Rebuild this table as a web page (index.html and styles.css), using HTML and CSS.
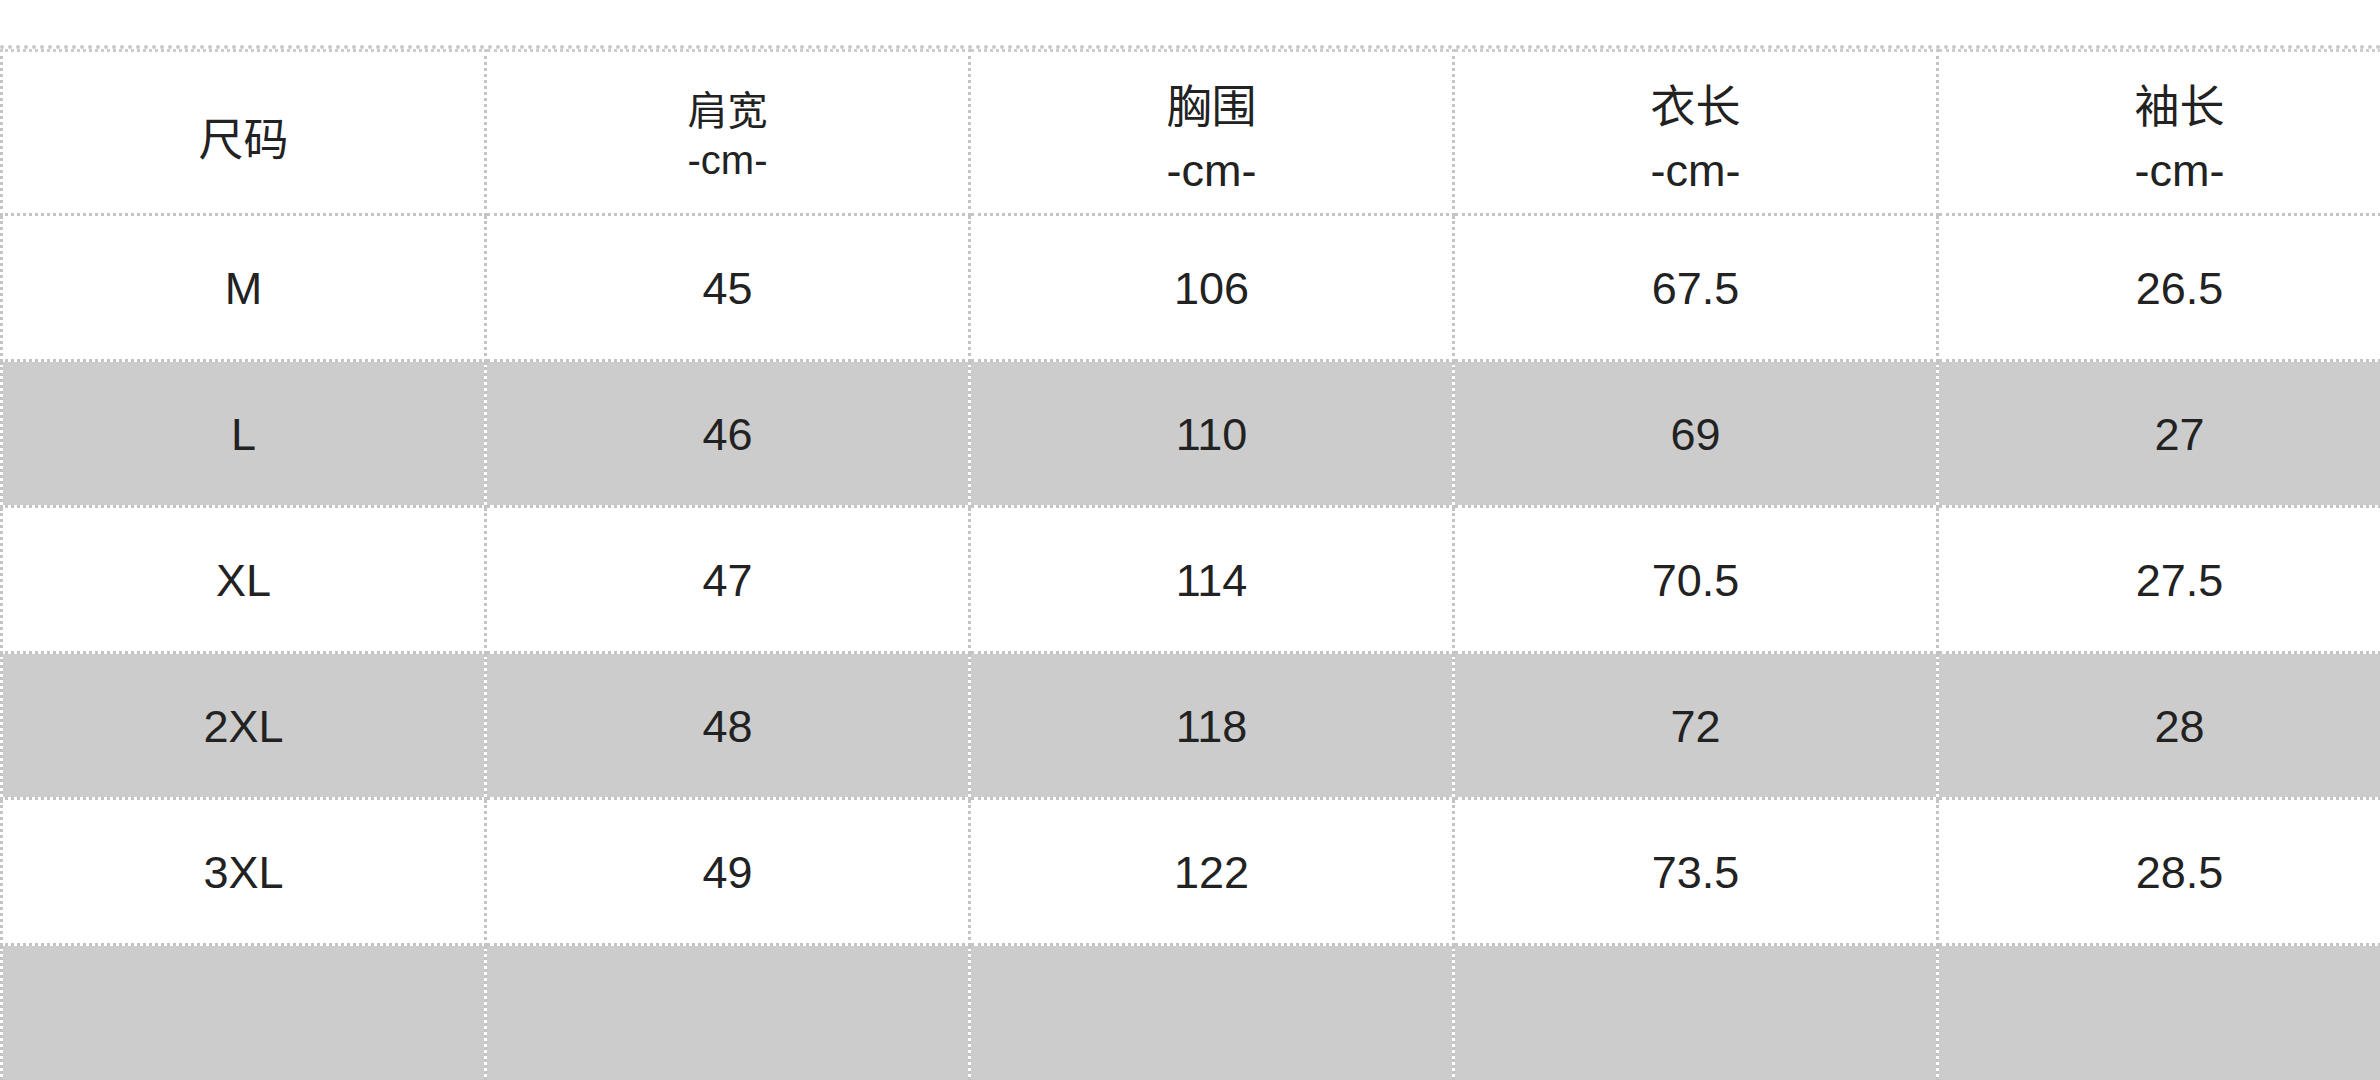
FILE: index.html
```html
<!DOCTYPE html>
<html lang="zh-CN">
<head>
<meta charset="utf-8">
<title>尺码表</title>
<link rel="stylesheet" href="styles.css">
</head>
<body>
<div class="sheet">
  <table class="size-table">
    <thead>
      <tr class="head-row">
        <th class="col first"><div class="label">尺码</div></th>
        <th class="col"><div class="label small"><div class="line">肩宽</div><div class="line unit">-cm-</div></div></th>
        <th class="col"><div class="label wide"><div class="line">胸围</div><div class="line unit">-cm-</div></div></th>
        <th class="col"><div class="label wide"><div class="line">衣长</div><div class="line unit">-cm-</div></div></th>
        <th class="col"><div class="label wide"><div class="line">袖长</div><div class="line unit">-cm-</div></div></th>
      </tr>
    </thead>
    <tbody>
      <tr class="row white"><td class="first">M</td><td>45</td><td>106</td><td>67.5</td><td>26.5</td></tr>
      <tr class="row gray"><td class="first">L</td><td>46</td><td>110</td><td>69</td><td>27</td></tr>
      <tr class="row white"><td class="first">XL</td><td>47</td><td>114</td><td>70.5</td><td>27.5</td></tr>
      <tr class="row gray"><td class="first">2XL</td><td>48</td><td>118</td><td>72</td><td>28</td></tr>
      <tr class="row white"><td class="first">3XL</td><td>49</td><td>122</td><td>73.5</td><td>28.5</td></tr>
      <tr class="row gray tail"><td class="first"></td><td></td><td></td><td></td><td></td></tr>
    </tbody>
  </table>
</div>
</body>
</html>
```

FILE: styles.css
```css
html, body {
  margin: 0;
  padding: 0;
  background: #ffffff;
  overflow: hidden;
  width: 2380px;
  height: 1080px;
}

.sheet {
  padding-top: 45px;
  width: 2440px;
}

.size-table {
  border-collapse: separate;
  border-spacing: 0;
  table-layout: fixed;
  width: 2423px;
  background: #ffffff;
  border-top: 4px dotted #c8c8c8;
  font-family: "Liberation Sans", "Noto Sans CJK SC", sans-serif;
  color: #222222;
}

.size-table th,
.size-table td {
  box-sizing: border-box;
  width: 484px;
  padding: 0;
  text-align: center;
  vertical-align: middle;
  font-weight: normal;
  border-right: 3px dotted #c4c4c4;
  border-bottom: 3px dotted #c4c4c4;
  background-clip: padding-box;
}

.size-table .first {
  width: 487px;
  border-left: 3px dotted #c4c4c4;
}

.head-row th {
  height: 167px;
  border-top: 3px dotted #cccccc;
  font-size: 46px;
}

.label {
  font-family: "Noto Sans CJK SC", sans-serif;
  font-size: 45px;
  line-height: 1;
  padding-top: 8px;
}

.label .unit {
  font-family: "Liberation Sans", sans-serif;
}

.label.small {
  font-size: 40px;
  padding-top: 3px;
}

.label.small .line {
  line-height: 52px;
}

.label.wide .line {
  line-height: 67px;
}

.row td {
  height: 146px;
  font-size: 45px;
  padding-top: 2px;
}

.row.white td {
  background-color: #ffffff;
}

.row.gray td {
  background-color: #cccccc;
}

.row.tail td {
  height: 200px;
}
```
